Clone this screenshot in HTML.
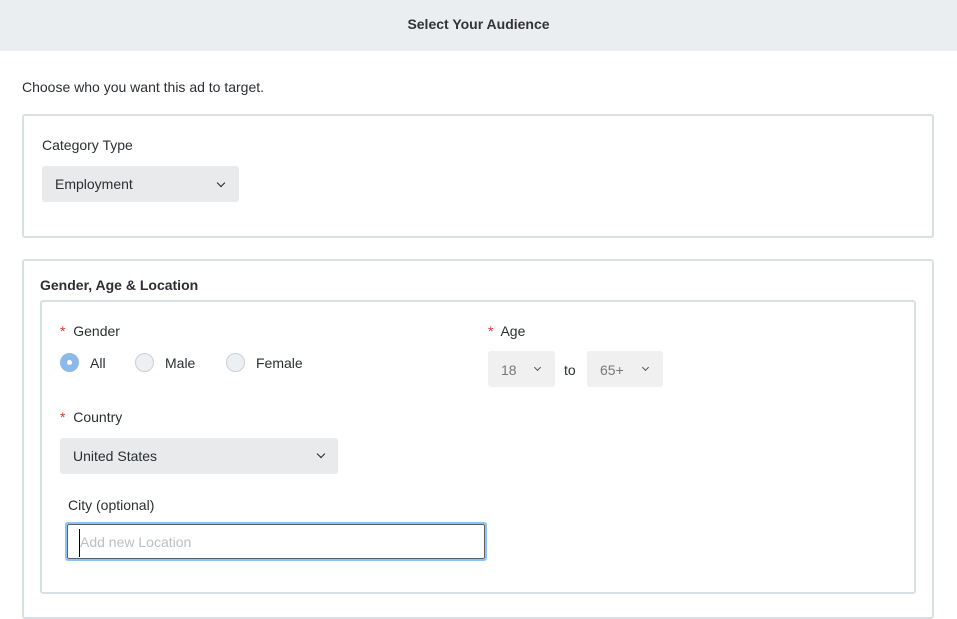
<!DOCTYPE html><html><head><style>
*{box-sizing:border-box;margin:0;padding:0}
body{width:957px;height:607px;overflow:hidden;background:#fff;font-family:"Liberation Sans",Arial,sans-serif;color:#2b2f33;font-size:14px;position:relative}
.a{position:absolute;white-space:nowrap;line-height:16px}
.box{position:absolute;border:2px solid #d9e0e4;border-radius:3px}
.sel{position:absolute;background:#e9eaec;border-radius:3px}
.chev{position:absolute;width:6px;height:6px;border-right:1.8px solid #222;border-bottom:1.8px solid #222;transform:rotate(45deg)}
.r{position:absolute;width:19px;height:19px;border-radius:50%;border:1px solid #c9cfd4;background:#edf0f3}
.st{color:#e0302f}
</style></head><body>
<div style="position:absolute;left:0;top:0;width:957px;height:51px;background:#ebeef1"></div>
<div class="a" style="left:0;width:957px;text-align:center;top:16px;font-weight:bold;color:#333">Select Your Audience</div>
<div class="a" style="left:22px;top:79px">Choose who you want this ad to target.</div>
<div class="box" style="left:22px;top:114px;width:912px;height:124px"></div>
<div class="a" style="left:42px;top:137px">Category Type</div>
<div class="sel" style="left:42px;top:166px;width:197px;height:36px"></div>
<div class="a" style="left:55px;top:176px">Employment</div>
<div class="chev" style="left:218px;top:180px"></div>
<div class="box" style="left:22px;top:259px;width:912px;height:360px"></div>
<div class="a" style="left:40px;top:277px;font-weight:bold">Gender, Age &amp; Location</div>
<div class="box" style="left:40px;top:300px;width:876px;height:294px"></div>
<div class="a" style="left:60px;top:323px"><span class="st">*</span>&nbsp; Gender</div>
<div class="r" style="left:60px;top:353px;background:#8cb9ea;border-color:#8cb9ea"></div>
<div style="position:absolute;left:67px;top:360px;width:5px;height:5px;border-radius:50%;background:#fff"></div>
<div class="a" style="left:90px;top:355px">All</div>
<div class="r" style="left:135px;top:353px"></div>
<div class="a" style="left:165px;top:355px">Male</div>
<div class="r" style="left:226px;top:353px"></div>
<div class="a" style="left:256px;top:355px">Female</div>
<div class="a" style="left:488px;top:323px"><span class="st">*</span>&nbsp; Age</div>
<div class="sel" style="left:488px;top:351px;width:67px;height:36px;background:#f0f0f0"></div>
<div class="a" style="left:501px;top:362px;color:#777">18</div>
<div class="chev" style="left:535px;top:365px;width:5px;height:5px;border-color:#555"></div>
<div class="a" style="left:564px;top:362px">to</div>
<div class="sel" style="left:587px;top:351px;width:76px;height:36px;background:#f0f0f0"></div>
<div class="a" style="left:600px;top:362px;color:#777">65+</div>
<div class="chev" style="left:643px;top:365px;width:5px;height:5px;border-color:#555"></div>
<div class="a" style="left:60px;top:409px"><span class="st">*</span>&nbsp; Country</div>
<div class="sel" style="left:60px;top:438px;width:278px;height:36px"></div>
<div class="a" style="left:73px;top:448px">United States</div>
<div class="chev" style="left:318px;top:451px"></div>
<div class="a" style="left:68px;top:497px">City (optional)</div>
<div style="position:absolute;left:65px;top:522px;width:422px;height:39px;border:2px solid #8cc3f0;border-radius:3px"></div>
<div style="position:absolute;left:67px;top:524px;width:418px;height:35px;border:1px solid #5a6066;border-radius:2px"></div>
<div style="position:absolute;left:79px;top:529px;width:1px;height:28px;background:#000"></div>
<div class="a" style="left:80px;top:534px;color:#b8c0c6">Add new Location</div>
</body></html>
